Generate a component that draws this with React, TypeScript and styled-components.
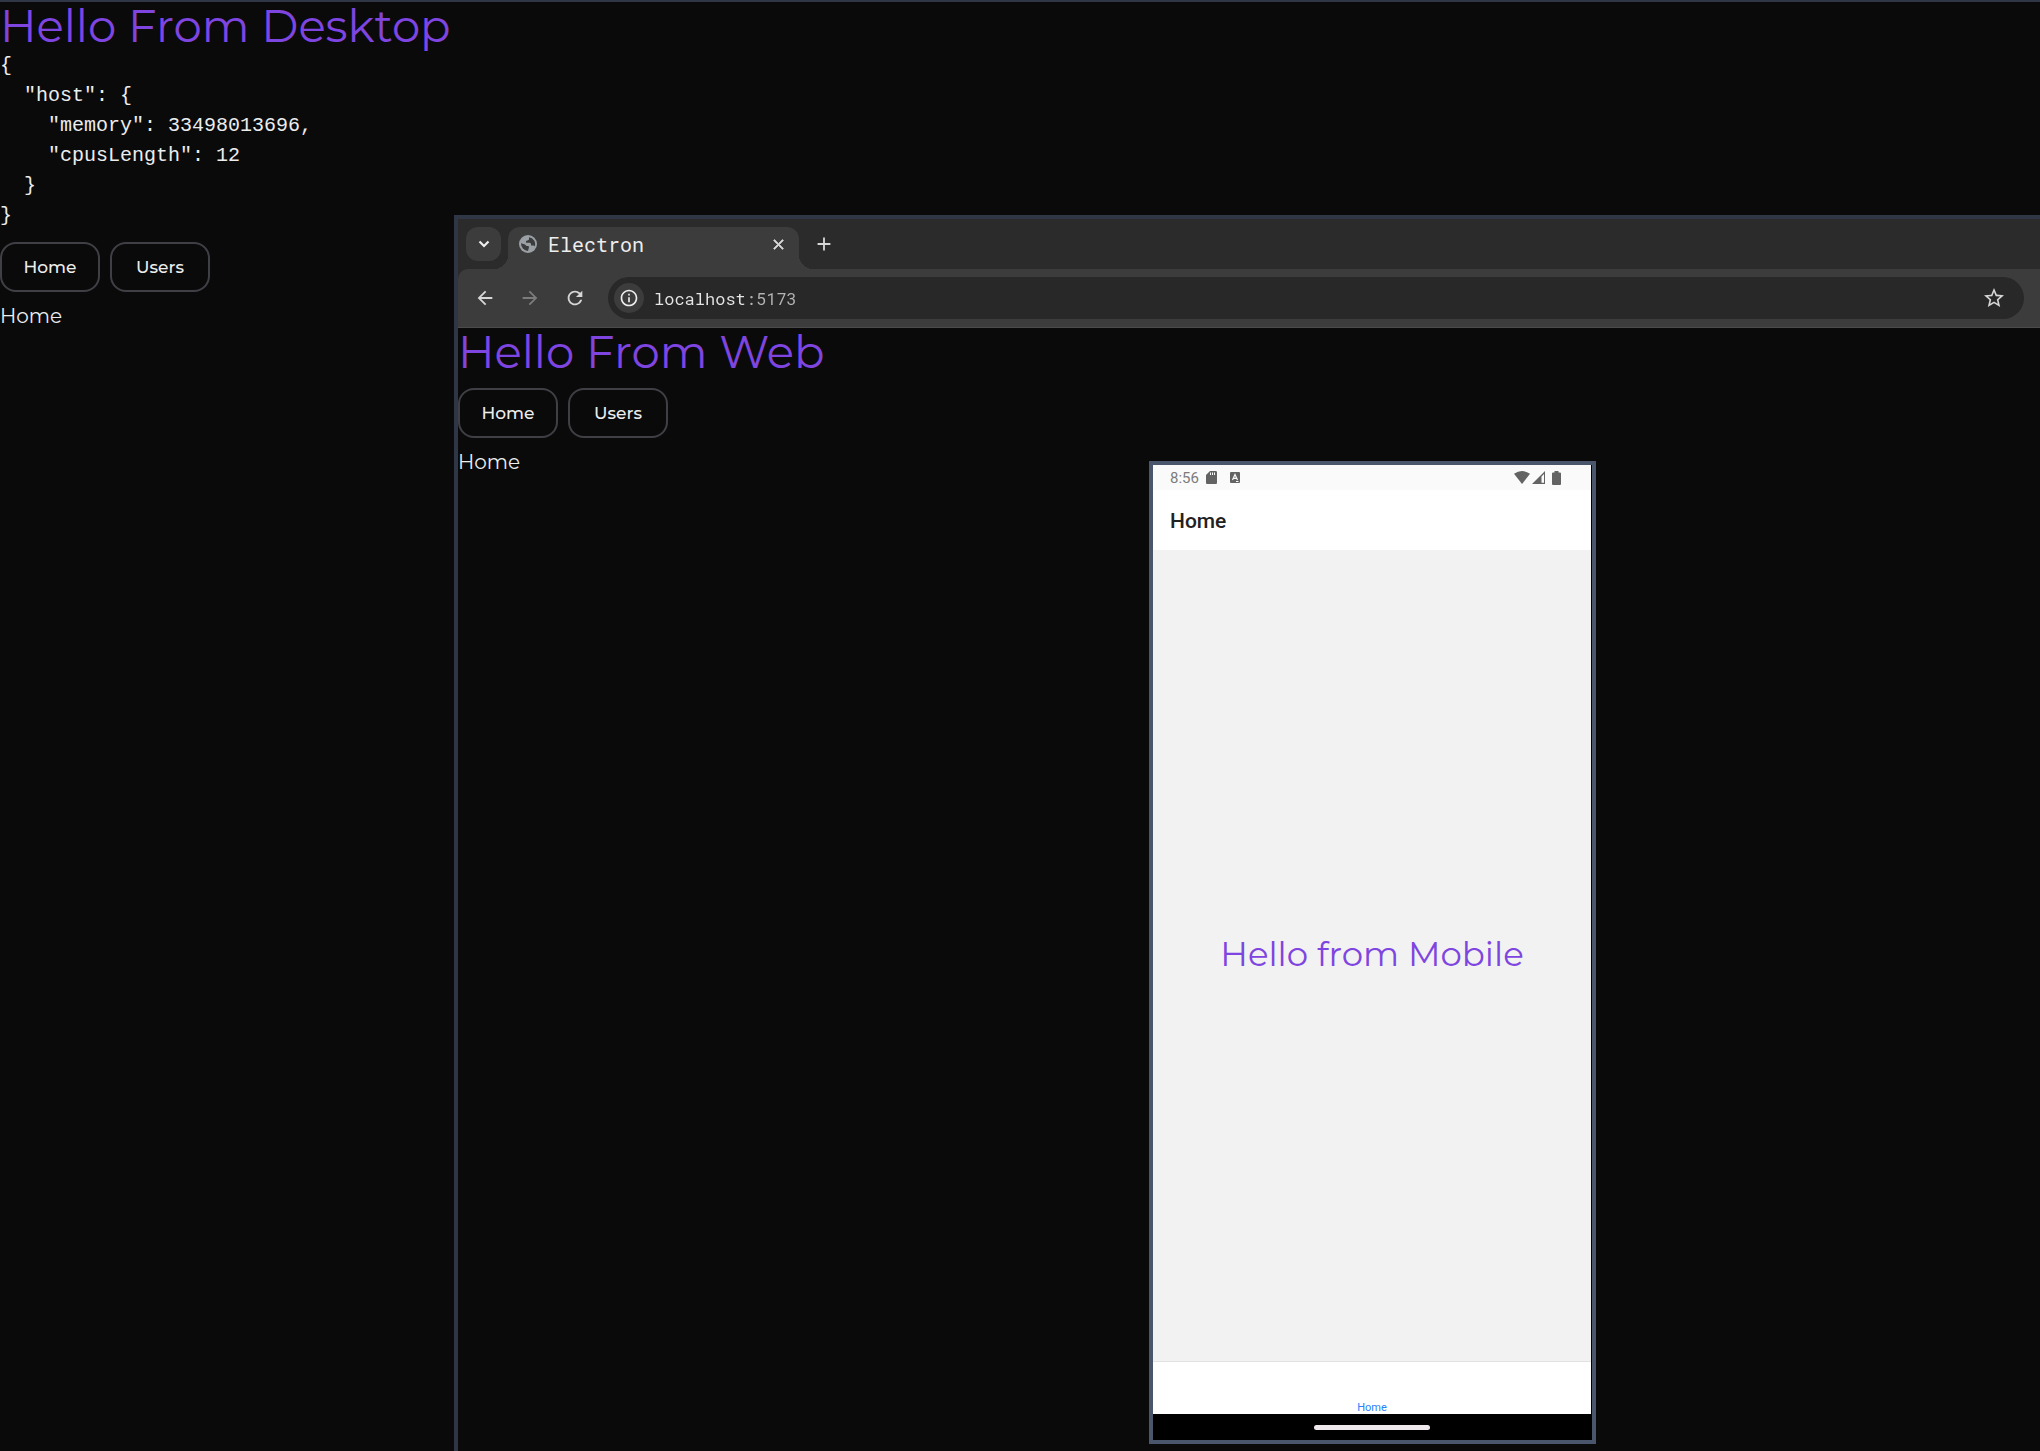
import React from 'react';
import styled, { createGlobalStyle } from 'styled-components';
import {
  MdAdd,
  MdArrowBack,
  MdArrowForward,
  MdClose,
  MdExpandMore,
  MdInfoOutline,
  MdRefresh,
  MdStarBorder,
} from 'react-icons/md';

const sans = 'Montserrat, Inter, "Open Sans", sans-serif';
const mono = '"Liberation Mono", monospace';
const chromeMono = '"Roboto Mono", "DejaVu Sans Mono", monospace';

const GlobalStyle = createGlobalStyle`
  *, *::before, *::after { box-sizing: border-box; }
  body { margin: 0; background: #0a0a0a; color: #ecedee; font-family: ${sans}; }
  button, input { font: inherit; color: inherit; margin: 0; }
`;

const Desktop = styled.main`
  position: relative;
  min-height: 100vh;
  border-top: 2px solid #2f3747;
`;

const Title = styled.h1`
  margin: 0;
  font-size: 45px;
  line-height: 48px;
  font-weight: 400;
  color: #7f45e0;
`;

const HostInfo = styled.pre`
  margin: 0;
  padding-top: 1px;
  font-family: ${mono};
  font-size: 20px;
  line-height: 30px;
`;

const Nav = styled.nav`
  display: flex;
  gap: 10px;
  margin: 12px 0 9px;

  ${HostInfo} + & {
    margin-top: 11px;
  }
`;

const NavButton = styled.button`
  width: 100px;
  height: 50px;
  padding: 0;
  border: 2px solid #3f3f46;
  border-radius: 16px;
  background: transparent;
  font-size: 17px;
  font-weight: 500;
`;

const PageText = styled.p`
  margin: 0;
  font-size: 20px;
  line-height: 30px;
  font-weight: 400;
`;

const BrowserWindow = styled.section`
  position: absolute;
  top: 213px;
  left: 454px;
  right: 0;
  bottom: 0;
  border: solid #2f3747;
  border-width: 4px 0 0 4px;
  background: #0a0a0a;
`;

const TabStrip = styled.div`
  display: flex;
  align-items: flex-start;
  height: 50px;
  padding: 8px 8px 0;
  background: #2b2b2b;
`;

const TabSearch = styled.button`
  display: grid;
  place-items: center;
  width: 35px;
  height: 34px;
  padding: 0;
  border: 0;
  border-radius: 12px;
  background: #3c3c3c;
`;

const Tab = styled.div`
  position: relative;
  display: flex;
  align-items: center;
  width: 291px;
  height: 42px;
  margin-left: 7px;
  padding: 0 11px 8px;
  border-radius: 12px 12px 0 0;
  background: #3c3c3c;

  &::before,
  &::after {
    content: '';
    position: absolute;
    bottom: 0;
    width: 14px;
    height: 14px;
  }
  &::before {
    right: 100%;
    background: radial-gradient(circle at 0 0, transparent 14px, #3c3c3c 14px);
  }
  &::after {
    left: 100%;
    background: radial-gradient(circle at 100% 0, transparent 14px, #3c3c3c 14px);
  }
`;

const TabTitle = styled.span`
  flex: 1;
  margin-left: 11px;
  font-family: ${chromeMono};
  font-size: 20px;
  line-height: 28px;
`;

const IconButton = styled.button<{ $size: number; $dim?: boolean; $bold?: boolean }>`
  display: grid;
  place-items: center;
  width: ${(p) => p.$size}px;
  height: ${(p) => p.$size}px;
  padding: 0;
  border: 0;
  border-radius: 50%;
  background: transparent;
  color: ${(p) => (p.$dim ? '#7c7c7c' : '#d6d6d6')};

  path:not([fill='none']) {
    stroke: currentColor;
    stroke-width: ${(p) => (p.$bold ? 1 : 0)};
  }
`;

const NewTab = styled(IconButton)`
  margin-left: 8px;
`;

const ToolbarBackdrop = styled.div`
  background: #2b2b2b;
`;

const Toolbar = styled.div`
  display: flex;
  align-items: center;
  gap: 12px;
  height: 59px;
  padding: 0 16px 0 10px;
  border-bottom: 1px solid #4c4c4c;
  border-radius: 10px 0 0 0;
  background: #3c3c3c;
`;

const Omnibox = styled.label`
  flex: 1;
  display: flex;
  align-items: center;
  height: 42px;
  margin-left: 5px;
  padding: 0 16px 0 6px;
  border-radius: 21px;
  background: #282828;
`;

const SiteInfo = styled.span`
  display: grid;
  place-items: center;
  width: 30px;
  height: 30px;
  border-radius: 50%;
  background: #3c3c3c;
`;

/* The host is bright and the port is dimmed, split after nine monospace characters. */
const Address = styled.input`
  flex: 1;
  min-width: 0;
  margin-left: 10px;
  padding: 2px 0 0;
  border: 0;
  outline: 0;
  background: linear-gradient(to right, #e6e6e6 0 92px, #b4b4b4 92px);
  background-clip: text;
  && {
    margin-left: 10px;
    color: transparent;
    font-family: ${chromeMono};
    font-size: 17px;
    line-height: 24px;
  }
`;

const Phone = styled.section`
  position: absolute;
  top: 459px;
  left: 1149px;
  display: flex;
  flex-direction: column;
  width: 447px;
  height: 983px;
  border: 4px solid #4a566c;
  background: #000;
  color: #212121;
  font-family: Roboto, sans-serif;
`;

const PhoneScreen = styled.div`
  flex: 1;
  display: flex;
  flex-direction: column;
  margin-right: 1px;
  background: #f2f2f2;
`;

const StatusBar = styled.div`
  display: flex;
  align-items: center;
  height: 25px;
  padding: 0 30px 0 17px;
  background: #fafafa;
  color: #7c7c7c;
  font-size: 15px;
`;

const StatusIcons = styled.span<{ $end?: boolean }>`
  display: flex;
  align-items: center;
  gap: ${(p) => (p.$end ? 2 : 13)}px;
  margin-left: ${(p) => (p.$end ? 'auto' : '7px')};
  color: #636363;
`;

const PhoneHeader = styled.header`
  display: flex;
  align-items: center;
  height: 60px;
  padding: 2px 17px 0;
  background: #fff;
`;

const PhoneHeading = styled.h2`
  margin: 0;
  font-size: 21px;
  font-weight: 500;
`;

const PhoneContent = styled.div`
  flex: 1;
  display: grid;
  place-items: center;
  padding-bottom: 4px;
`;

const Greeting = styled.p`
  margin: 0;
  font-family: ${sans};
  font-size: 34px;
  line-height: 40px;
  font-weight: 400;
  color: #7f45e0;
`;

const PhoneTabs = styled.nav`
  display: flex;
  align-items: flex-end;
  justify-content: center;
  height: 53px;
  border-top: 1px solid #e2e2e2;
  background: #fff;
`;

const PhoneTab = styled.a`
  color: #2b7fff;
  font-size: 11px;
  line-height: 13px;
  text-decoration: none;
`;

const GestureBar = styled.div`
  display: grid;
  place-items: center;
  height: 26px;
  padding-right: 2px;
`;

const GesturePill = styled.span`
  width: 116px;
  height: 5px;
  border-radius: 3px;
  background: #eee8ec;
`;

const Globe = () => (
  <svg width="18" height="18" viewBox="0 0 18 18" aria-hidden="true">
    <circle cx="9" cy="9" r="9" fill="#9aa0a6" />
    <path d="M10 2.200V4c0 1-.8 1.400-1.600 1.500L7 6v1.800h3.500c1 0 1.500.8 1.500 1.600v1h2c1 0 1.400.4 1.700 1.200A7 7 0 0 0 10 2.200ZM2.100 8.300 6 9.500 7.500 11H9q1 0 1 1.200L9 15.900A7 7 0 0 1 2.100 8.300Z" fill="#3c3c3c" />
  </svg>
);

const SdCard = () => (
  <svg width="11" height="13" viewBox="0 0 11 13" aria-hidden="true">
    <path fill="currentColor" fillRule="evenodd" d="M4 0h5.500C10.500 0 11 .5 11 1.500v10c0 1-.5 1.500-1.500 1.500h-8C.5 13 0 12.500 0 11.500V4ZM4 1.500V4h1V1.500Zm2 0V4h1V1.500Zm2 0V4h1V1.500Z" />
  </svg>
);

const LetterBadge = () => (
  <svg width="10" height="11" viewBox="0 0 10 11" aria-hidden="true">
    <rect width="10" height="11" rx="1" fill="currentColor" />
    <path d="M2.500 8 5 2.500 7.500 8M3.400 6.300h3.200M6 9.500h2.500" fill="none" stroke="#fafafa" strokeWidth="1.200" />
  </svg>
);

const Wifi = () => (
  <svg width="16" height="13" viewBox="0 0 16 13" aria-hidden="true">
    <path d="M0 2.800Q8-2.800 16 2.800L8 13Z" fill="currentColor" />
  </svg>
);

const Signal = () => (
  <svg width="13" height="13" viewBox="0 0 13 13" aria-hidden="true">
    <path fill="currentColor" fillRule="evenodd" d="M13 0v13H0ZM9.500 5.500v6.300H12V3Z" />
  </svg>
);

const Battery = () => (
  <svg width="9" height="14" viewBox="0 0 9 14" aria-hidden="true">
    <path d="M2.500 0h4v1.500H8q1 0 1 1V13q0 1-1 1H1q-1 0-1-1V2.500q0-1 1-1h1.500Z" fill="currentColor" />
  </svg>
);

const Chevron = () => (
  <svg width="12" height="8" viewBox="0 0 12 8" aria-hidden="true">
    <path d="m1.500 1.500 4.500 4.500 4.500-4.500" fill="none" stroke="currentColor" strokeWidth="2.200" />
  </svg>
);

const BatterySlot = styled.span`
  display: flex;
  margin-left: 5px;
`;

const hostInfo = { host: { memory: 33498013696, cpusLength: 12 } };

const Routes = () => (
  <>
    <Nav>
      <NavButton type="button">Home</NavButton>
      <NavButton type="button">Users</NavButton>
    </Nav>
    <PageText>Home</PageText>
  </>
);

export default function App() {
  return (
    <>
      <GlobalStyle />
      <Desktop>
        <Title>Hello From Desktop</Title>
        <HostInfo>{JSON.stringify(hostInfo, null, 2)}</HostInfo>
        <Routes />

        <BrowserWindow>
          <TabStrip>
            <TabSearch type="button" aria-label="Search tabs"><Chevron /></TabSearch>
            <Tab>
              <Globe />
              <TabTitle>Electron</TabTitle>
              <IconButton type="button" $size={20} $bold aria-label="Close tab"><MdClose size={17} /></IconButton>
            </Tab>
            <NewTab type="button" $size={34} aria-label="New tab"><MdAdd size={22} /></NewTab>
          </TabStrip>
          <ToolbarBackdrop>
            <Toolbar>
              <IconButton type="button" $size={33} aria-label="Back"><MdArrowBack size={22} /></IconButton>
              <IconButton type="button" $size={33} $dim aria-label="Forward"><MdArrowForward size={22} /></IconButton>
              <IconButton type="button" $size={33} aria-label="Reload"><MdRefresh size={22} /></IconButton>
              <Omnibox>
                <SiteInfo><MdInfoOutline size={20} /></SiteInfo>
                <Address aria-label="Address" defaultValue="localhost:5173" />
                <IconButton type="button" $size={28} aria-label="Bookmark"><MdStarBorder size={24} /></IconButton>
              </Omnibox>
            </Toolbar>
          </ToolbarBackdrop>
          <Title>Hello From Web</Title>
          <Routes />
        </BrowserWindow>

        <Phone>
          <PhoneScreen>
            <StatusBar>
              8:56
              <StatusIcons><SdCard /><LetterBadge /></StatusIcons>
              <StatusIcons $end><Wifi /><Signal /><BatterySlot><Battery /></BatterySlot></StatusIcons>
            </StatusBar>
            <PhoneHeader><PhoneHeading>Home</PhoneHeading></PhoneHeader>
            <PhoneContent><Greeting>Hello from Mobile</Greeting></PhoneContent>
            <PhoneTabs><PhoneTab href="#home">Home</PhoneTab></PhoneTabs>
          </PhoneScreen>
          <GestureBar><GesturePill /></GestureBar>
        </Phone>
      </Desktop>
    </>
  );
}
